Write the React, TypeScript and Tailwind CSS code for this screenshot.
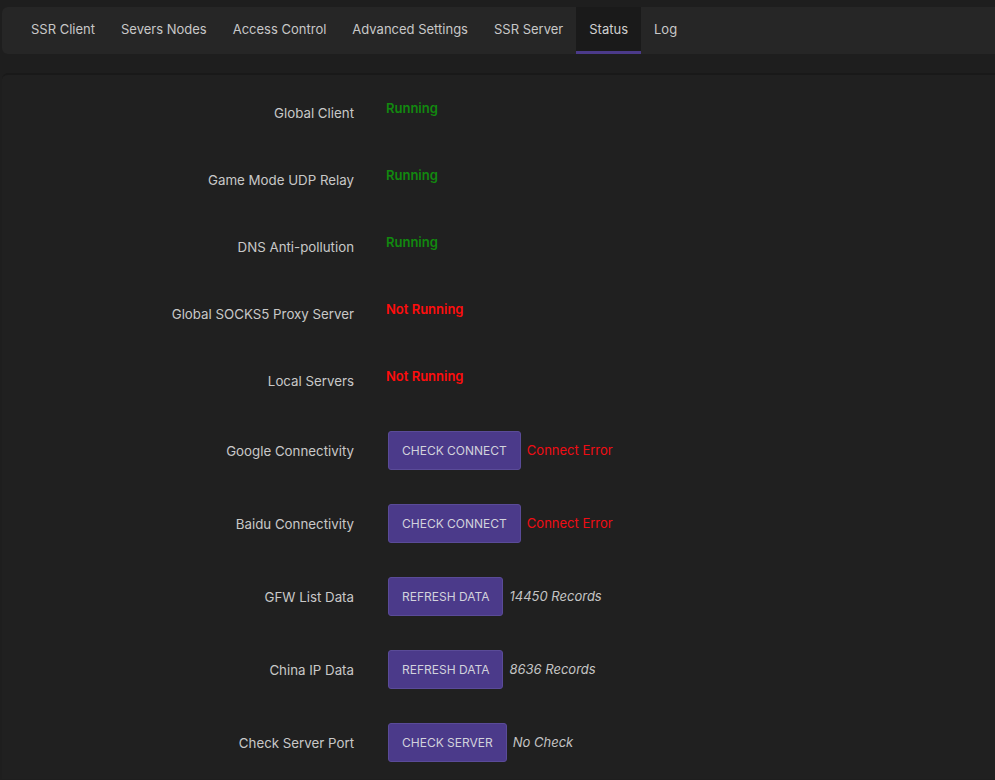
import React from "react";

const tabs = [
  "SSR Client",
  "Severs Nodes",
  "Access Control",
  "Advanced Settings",
  "SSR Server",
  "Status",
  "Log",
];

type Row =
  | { label: string; kind: "status"; ok: boolean }
  | { label: string; kind: "button"; button: string; result: string; error?: boolean };

const rows: Row[] = [
  { label: "Global Client", kind: "status", ok: true },
  { label: "Game Mode UDP Relay", kind: "status", ok: true },
  { label: "DNS Anti-pollution", kind: "status", ok: true },
  { label: "Global SOCKS5 Proxy Server", kind: "status", ok: false },
  { label: "Local Servers", kind: "status", ok: false },
  { label: "Google Connectivity", kind: "button", button: "CHECK CONNECT", result: "Connect Error", error: true },
  { label: "Baidu Connectivity", kind: "button", button: "CHECK CONNECT", result: "Connect Error", error: true },
  { label: "GFW List Data", kind: "button", button: "REFRESH DATA", result: "14450 Records" },
  { label: "China IP Data", kind: "button", button: "REFRESH DATA", result: "8636 Records" },
  { label: "Check Server Port", kind: "button", button: "CHECK SERVER", result: "No Check" },
];

export default function App() {
  return (
    <div
      className="min-h-screen bg-[#1e1e1e] text-[#c8c8c8] overflow-hidden"
      style={{ fontFamily: "Inter, 'Open Sans', sans-serif" }}
    >
      {/* Tabs */}
      <div className="pt-[7px] pl-[2px]">
        <div className="h-[47px] bg-[#262626] rounded-l-md flex pl-4 text-[13px]">
          {tabs.map((t) => {
            const active = t === "Status";
            return (
              <div
                key={t}
                className={
                  active
                    ? "px-[13px] flex items-center bg-[#1a1a1a] border-b-[3px] border-[#4b3a8a] pt-[1px] text-[#d0d0d0]"
                    : "px-[13px] flex items-center pb-[2px] text-[#c8c8c8]"
                }
              >
                {t}
              </div>
            );
          })}
        </div>
      </div>

      {/* Status panel */}
      <div className="mt-[19px] ml-[2px] bg-[#202020] border-t-2 border-[#191919] rounded-tl-md pt-[4px]">
        {rows.map((r) => (
          <div
            key={r.label}
            className={
              r.kind === "status" ? "h-[67px] flex items-center" : "h-[73px] flex items-center"
            }
          >
            <div className="w-[352px] text-right text-[13.3px] leading-5 text-[#c8c8c8]">{r.label}</div>
            <div className="ml-8 flex items-center">
              {r.kind === "status" ? (
                <span
                  className={
                    r.ok
                      ? "mb-2 font-semibold text-[13px] text-[#12890f]"
                      : "mb-2 font-semibold text-[13px] text-[#ff0d0d]"
                  }
                >
                  {r.ok ? "Running" : "Not Running"}
                </span>
              ) : (
                <>
                  <button className="ml-[2px] h-[39px] px-[13px] bg-[#4b3a8a] border border-[#5a4b98] rounded-[3px] text-[12px] text-[#d2d2dc]">
                    {r.button}
                  </button>
                  <span
                    className={
                      r.error
                        ? "ml-[6px] text-[13px] text-[#f00d14]"
                        : "ml-[6px] text-[13px] italic text-[#c4c4c4]"
                    }
                  >
                    {r.result}
                  </span>
                </>
              )}
            </div>
          </div>
        ))}
      </div>
    </div>
  );
}
